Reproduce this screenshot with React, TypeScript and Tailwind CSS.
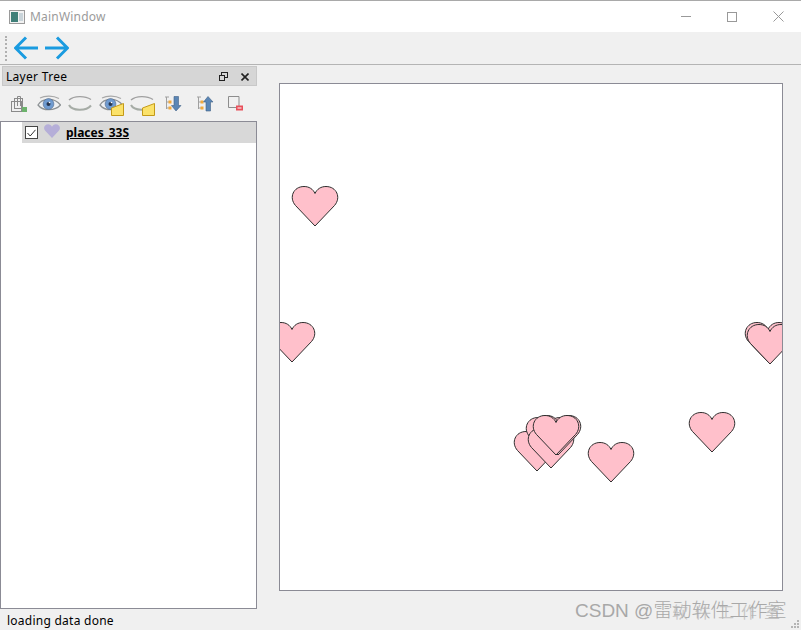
const HEART = "M23 40 L3.5 19.5 C-3.5 11.5 1.5 0.5 12 0.5 C17 0.5 21 3 23 7.5 C25 3 29 0.5 34 0.5 C44.5 0.5 49.5 11.5 42.5 19.5 Z";

// layer features, in canvas coordinates (canvas starts at 280,84)
const hearts = [
  [12, 102],
  [-11, 238],
  [308, 358],
  [409, 328],
  [234, 347],
  [246, 333],
  [248, 344],
  [255, 331],
  [253, 331],
  [465, 238],
  [467, 240],
];

const Eye = ({ open }: { open: boolean }) => (
  <svg width="24" height="18" viewBox="0 0 24 18" fill="none">
    {open ? (
      <>
        <path d="M1 10 C5 3 17 2 23.5 10 C18 16 6 16.5 1 10 Z" fill="#eef1f4" stroke="#8d9294" strokeWidth="1.3" />
        <path d="M3 3 C8 0.5 16 0.5 22 3.5" stroke="#a8a8a8" strokeWidth="1.2" />
        <circle cx="11.5" cy="9" r="5.4" fill="#6f9bd0" stroke="#50688a" strokeWidth="0.6" />
        <circle cx="11.5" cy="9" r="2" fill="#27364f" />
        <circle cx="12.5" cy="7.5" r="0.8" fill="#fff" />
      </>
    ) : (
      <>
        <path d="M1 5 C6 0.5 17 0.5 23 4.5" stroke="#a0a0a0" strokeWidth="1.3" />
        <path d="M1 10 C4 16 18 16.5 23 10.5" stroke="#a6aca6" strokeWidth="2" />
      </>
    )}
  </svg>
);

const Sticky = () => (
  <svg width="13" height="13" viewBox="0 0 13 13" className="absolute right-[-1px] bottom-[-3px]">
    <path d="M0.5 5 L12.5 0.5 L12.5 12.5 L0.5 12.5 Z" fill="#fbe26a" stroke="#c49a18" />
  </svg>
);

const TreeIcon = ({ up }: { up: boolean }) => (
  <svg width="18" height="16" viewBox="0 0 18 16" fill="none">
    <path d="M1 1 H5 M2.5 1 V13 M2.5 6 H5 M2.5 12 H5" stroke="#a0a0a0" />
    <rect x="4.5" y="4.5" width="3" height="3" fill="#f3a93a" />
    <rect x="4.5" y="10.5" width="3" height="3" fill="#f3a93a" />
    {up ? (
      <path d="M12 0.5 L17 6 H14.5 V15 H10 V6 H7.5 Z" fill="#5b86b5" stroke="#3f6187" strokeWidth="0.6" />
    ) : (
      <path d="M10 0.5 H14.5 V9.5 H17 L12 15 L7.5 9.5 H10 Z" fill="#5b86b5" stroke="#3f6187" strokeWidth="0.6" />
    )}
  </svg>
);

export default function App() {
  return (
    <div className="relative flex h-[630px] w-[801px] flex-col overflow-hidden bg-[#f0f0f0] font-['Noto_Sans','Noto_Sans_CJK_SC',sans-serif] text-[13px] text-black">
      {/* title bar */}
      <div className="flex h-[32px] shrink-0 items-center border-t border-[#a9a9a9] bg-white pl-[9px]">
        <svg width="16" height="14" viewBox="0 0 16 14">
          <rect x="0.5" y="0.5" width="15" height="13" fill="#f2f2f2" stroke="#9a9a9a" />
          <rect x="2" y="2" width="7" height="10" fill="#3f7f78" />
          <rect x="10" y="3" width="4" height="8" fill="#c9d4da" />
        </svg>
        <span className="ml-[5px] text-[12px] tracking-[0.2px] text-[#9b9b9b]">MainWindow</span>
        <div className="ml-auto flex items-center text-[#999]">
          <div className="flex w-[46px] justify-center">
            <div className="h-px w-[10px] bg-[#999]" />
          </div>
          <div className="flex w-[46px] justify-center">
            <div className="h-[10px] w-[10px] border border-[#999]" />
          </div>
          <div className="flex w-[46px] justify-center">
            <svg width="11" height="11" viewBox="0 0 11 11">
              <path d="M0.5 0.5 L10.5 10.5 M10.5 0.5 L0.5 10.5" stroke="#999" />
            </svg>
          </div>
        </div>
      </div>

      {/* toolbar */}
      <div className="flex h-[33px] shrink-0 items-center border-b border-[#b4b4b4] pl-[5px]">
        <div className="h-[25px] w-[2px] border-l-2 border-dotted border-[#b0b0b0]" />
        <div className="ml-[7px] flex gap-[7px]">
          <svg width="24" height="24" viewBox="0 0 24 24" fill="none" stroke="#1a9be0" strokeWidth="3">
            <path d="M24 12 H2 M12 1.5 L1.5 12 L12 22.5" />
          </svg>
          <svg width="24" height="24" viewBox="0 0 24 24" fill="none" stroke="#1a9be0" strokeWidth="3">
            <path d="M0 12 H22 M12 1.5 L22.5 12 L12 22.5" />
          </svg>
        </div>
      </div>

      <div className="flex min-h-0 flex-1">
        {/* layer tree dock */}
        <div className="flex w-[257px] shrink-0 flex-col pt-px">
          <div className="ml-[2px] flex h-[20px] items-center border border-[#c8c8c8] bg-[#d6d6d6] pl-[3px] pt-px">
            <span className="text-[12px] tracking-[0.3px]">Layer Tree</span>
            <svg width="9" height="9" viewBox="0 0 9 9" fill="none" stroke="#222" className="ml-auto">
              <rect x="2.5" y="0.5" width="6" height="5" />
              <rect x="0.5" y="3.5" width="5" height="5" fill="#d6d6d6" />
            </svg>
            <svg width="8" height="8" viewBox="0 0 8 8" stroke="#222" strokeWidth="1.6" className="ml-[13px] mr-[7px]">
              <path d="M0.5 0.5 L7.5 7.5 M7.5 0.5 L0.5 7.5" />
            </svg>
          </div>

          <div className="flex h-[35px] items-center pl-[11px]">
            <svg width="16" height="18" viewBox="0 0 16 18" fill="none" stroke="#8a8a8a">
              <rect x="0.5" y="6.5" width="10" height="10" />
              <rect x="3.5" y="3.5" width="8" height="10" />
              <path d="M6.5 11 V1.5 H9.5 V11" />
              <rect x="11" y="12" width="5" height="5" fill="#6cb26c" stroke="none" />
            </svg>
            <div className="ml-[10px] flex items-center gap-[7px]">
              <Eye open />
              <Eye open={false} />
              <div className="relative">
                <Eye open />
                <Sticky />
              </div>
              <div className="relative">
                <Eye open={false} />
                <Sticky />
              </div>
            </div>
            <div className="ml-[10px]">
              <TreeIcon up={false} />
            </div>
            <div className="ml-[14px]">
              <TreeIcon up />
            </div>
            <svg width="15" height="15" viewBox="0 0 15 15" fill="none" className="ml-[14px]">
              <path d="M11 10 V0.5 H0.5 V11.5 H8" stroke="#8d8d8d" />
              <rect x="8" y="9.5" width="7" height="5" fill="#e8505b" />
              <rect x="9.5" y="11.5" width="4" height="1" fill="#fff" />
            </svg>
          </div>

          <div className="min-h-0 flex-1 border border-[#8b8b95] bg-white pl-[21px]">
            <div className="flex h-[21px] items-center bg-[#d8d8d8] pl-[3px]">
              <div className="flex h-[13px] w-[13px] items-center justify-center border border-[#444] bg-white">
                <svg width="9" height="8" viewBox="0 0 9 8" fill="none" stroke="#333">
                  <path d="M0.5 4 L3.2 7 L8.5 0.8" />
                </svg>
              </div>
              <svg width="16" height="14" viewBox="0 0 46 40" className="ml-[6px] -mt-[3px]">
                <path d={HEART} fill="#b5aed8" />
              </svg>
              <span className="ml-[6px] text-[12px] font-bold underline">places_33S</span>
            </div>
          </div>

          <div className="flex h-[21px] shrink-0 items-center pl-[7px] pt-[2px] text-[12px] tracking-[0.25px]">loading data done</div>
        </div>

        {/* map canvas */}
        <div className="pl-[22px] pt-[18px]">
          <div className="h-[508px] w-[504px] overflow-hidden border border-[#8b8b95] bg-white">
            <svg width="502" height="506" viewBox="0 0 502 506">
              {hearts.map(([x, y], i) => (
                <path key={i} d={HEART} transform={`translate(${x} ${y})`} fill="#ffc0cb" stroke="#2e2e2e" strokeWidth="1" />
              ))}
            </svg>
          </div>
        </div>
      </div>

      {/* watermark over the corner of the window */}
      <div className="absolute left-[575px] top-[600px] whitespace-nowrap font-['Liberation_Sans','Noto_Sans_CJK_SC',sans-serif] text-[19px] font-light leading-[22px] text-[#a8a8a8]">
        CSDN @雷动软件工作室
      </div>
      <div className="absolute left-[672px] top-[601px] whitespace-nowrap text-[16px] leading-[22px] tracking-[7px] text-[#b4b4b4]/70">
        软件工作室
      </div>
      <svg width="10" height="10" viewBox="0 0 10 10" className="absolute bottom-[1px] right-[1px]" fill="#b5b5b5">
        <rect x="7" y="1" width="2" height="2" />
        <rect x="4" y="4" width="2" height="2" />
        <rect x="7" y="4" width="2" height="2" />
        <rect x="1" y="7" width="2" height="2" />
        <rect x="4" y="7" width="2" height="2" />
        <rect x="7" y="7" width="2" height="2" />
      </svg>
    </div>
  );
}
